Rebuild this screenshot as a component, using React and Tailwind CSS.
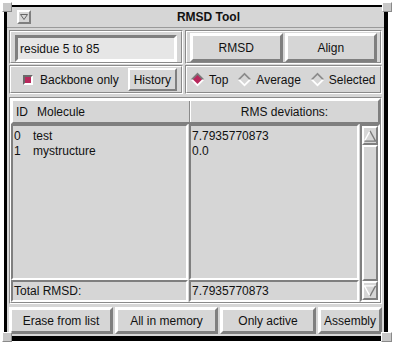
import React from "react";

const raised =
  "border-2 border-t-white border-l-white border-b-[#7f7f7f] border-r-[#7f7f7f]";
const sunken =
  "border-2 border-t-[#7f7f7f] border-l-[#7f7f7f] border-b-white border-r-white";
const etched = "border border-t-[#8a8a8a] border-l-[#8a8a8a] border-b-white border-r-white";

function Frame({ className = "", children }) {
  // etched group frame (Motif style)
  return (
    <div className={`${etched} ${className}`}>
      <div className="h-full border border-t-white border-l-white border-b-[#8a8a8a] border-r-[#8a8a8a]">
        {children}
      </div>
    </div>
  );
}

function Radio({ on, label }) {
  return (
    <span className="flex items-center gap-[4px]">
      <svg width="15" height="15" viewBox="0 0 15 15">
        {on ? (
          <>
            <polygon points="7.5,0.5 14.5,7.5 7.5,14.5 0.5,7.5" fill="#ffffff" />
            <polygon points="7.5,0.5 14.5,7.5 0.5,7.5" fill="#7a7a7a" />
            <polygon points="7.5,3 12,7.5 7.5,12 3,7.5" fill="#b8285c" />
          </>
        ) : (
          <>
            <polygon points="7.5,0.5 14.5,7.5 7.5,14.5 0.5,7.5" fill="#ffffff" />
            <polygon points="7.5,0.5 14.5,7.5 0.5,7.5" fill="#8a8a8a" />
            <polygon points="7.5,3 12,7.5 7.5,12 3,7.5" fill="#d6d6d6" />
          </>
        )}
      </svg>
      <span>{label}</span>
    </span>
  );
}

function Arrow({ up }) {
  return (
    <div className={`${raised} h-[19px] flex items-center justify-center bg-[#d6d6d6]`}>
      <svg width="13" height="12" viewBox="0 0 13 12">
        {up ? (
          <>
            <polygon points="6.5,0.5 12.5,11.5 0.5,11.5" fill="#d6d6d6" />
            <polyline points="0.5,11.5 6.5,0.5" stroke="#ffffff" strokeWidth="1.4" fill="none" />
            <polyline points="6.5,0.5 12.5,11.5 0.5,11.5" stroke="#7a7a7a" strokeWidth="1.4" fill="none" />
          </>
        ) : (
          <>
            <polygon points="0.5,0.5 12.5,0.5 6.5,11.5" fill="#d6d6d6" />
            <polyline points="6.5,11.5 0.5,0.5 12.5,0.5" stroke="#ffffff" strokeWidth="1.4" fill="none" />
            <polyline points="12.5,0.5 6.5,11.5" stroke="#7a7a7a" strokeWidth="1.4" fill="none" />
          </>
        )}
      </svg>
    </div>
  );
}

const rows = [
  { id: "0", name: "test", rms: "7.7935770873" },
  { id: "1", name: "mystructure", rms: "0.0" },
];

export default function App() {
  return (
    <div className="w-[395px] h-[350px] bg-white relative pl-[4px] pt-[5px] text-[12px] text-[#111] font-['Liberation_Sans',Arial,sans-serif]">
      {/* window corner handles */}
      <div className="absolute left-[2px] top-[2px] w-[10px] h-[10px] bg-[#c8c8c8] border border-t-white border-l-white border-b-[#8a8a8a] border-r-[#8a8a8a]" />
      <div className="absolute left-[382px] top-[2px] w-[10px] h-[10px] bg-[#c8c8c8] border border-t-white border-l-white border-b-[#8a8a8a] border-r-[#8a8a8a]" />
      <div className="absolute left-[2px] top-[332px] w-[10px] h-[10px] bg-[#c8c8c8] border border-t-white border-l-white border-b-[#8a8a8a] border-r-[#8a8a8a]" />
      <div className="absolute left-[381px] top-[332px] w-[11px] h-[10px] bg-[#c8c8c8] border border-t-white border-l-white border-b-[#8a8a8a] border-r-[#8a8a8a]" />

      <div className="w-[384px] h-[336px] border-black border-t-2 border-l-[3px] border-r-[4px] border-b-[5px] bg-[#d6d6d6] flex flex-col">
        {/* title bar */}
        <div className="h-[21px] flex items-center border-b border-b-[#9a9a9a]">
          <div className={`ml-[10px] w-[14px] h-[14px] ${raised} border flex items-center justify-center`}>
            <svg width="8" height="6" viewBox="0 0 8 6">
              <polygon points="0.5,0.5 7.5,0.5 4,5.5" fill="none" stroke="#666" />
            </svg>
          </div>
          <div className="flex-1 text-center font-bold text-[12px] pl-[2px]">RMSD Tool</div>
        </div>

        <div className="flex-1 flex flex-col px-[2px] pt-[2px] pb-[2px] gap-[2px]">
          {/* top controls */}
          <div className="grid grid-cols-[174px_1fr] grid-rows-[34px_29px] gap-x-[2px] gap-y-[1px]">
            <Frame className="h-full">
              <div className="px-[4px] pt-[3px]">
                <div className={`${sunken} h-[27px] bg-[#e6e6e6] flex items-center pl-[2px] border-[3px]`}>
                  residue 5 to 85
                </div>
              </div>
            </Frame>
            <Frame className="h-full">
              <div className="flex gap-[2px] px-[3px] pt-[1px] h-full">
                <button className={`${raised} border-[3px] flex-1 h-[29px] bg-[#d6d6d6]`}>RMSD</button>
                <button className={`${raised} border-[3px] flex-1 h-[29px] bg-[#d6d6d6]`}>Align</button>
              </div>
            </Frame>
            <Frame className="h-full">
              <div className="flex items-center h-full pl-[12px] pr-[4px]">
                <span className={`w-[10px] h-[10px] bg-[#b8285c] border-2 border-t-[#6a6a6a] border-l-[#6a6a6a] border-b-white border-r-white`} />
                <span className="ml-[7px] flex-1">Backbone only</span>
                <button className={`${raised} h-[23px] px-[4px] bg-[#d6d6d6]`}>History</button>
              </div>
            </Frame>
            <Frame className="h-full">
              <div className="flex items-center h-full pl-[3px] gap-[9px]">
                <Radio on label="Top" />
                <Radio label="Average" />
                <Radio label="Selected" />
              </div>
            </Frame>
          </div>

          {/* list */}
          <Frame className="flex-1 mt-[1px]">
            <div className="flex flex-col h-full">
              <div className={`h-[25px] flex ${raised} border`}>
                <div className="w-[177px] flex items-center pl-[3px] gap-[9px] border-r border-r-[#8a8a8a]">
                  <span>ID</span>
                  <span>Molecule</span>
                </div>
                <div className="flex-1 flex items-center justify-center border-l border-l-white">RMS deviations:</div>
              </div>
              <div className="flex-1 flex">
                <div className="flex-1 flex flex-col">
                  <div className="flex-1 flex">
                    <div className={`w-[177px] ${sunken} border pt-[2px]`}>
                      {rows.map((r) => (
                        <div key={r.id} className="flex h-[15px] items-center">
                          <span className="w-[20px] pl-[1px]">{r.id}</span>
                          <span>{r.name}</span>
                        </div>
                      ))}
                    </div>
                    <div className={`flex-1 ${sunken} border pt-[2px] ml-[1px]`}>
                      {rows.map((r) => (
                        <div key={r.id} className="h-[15px] flex items-center pl-[1px]">{r.rms}</div>
                      ))}
                    </div>
                  </div>
                  <div className="h-[22px] flex">
                    <div className={`w-[177px] ${sunken} border flex items-center pl-[1px]`}>Total RMSD:</div>
                    <div className={`flex-1 ${sunken} border flex items-center pl-[1px] ml-[1px]`}>7.7935770873</div>
                  </div>
                </div>
                <div className={`w-[20px] flex flex-col ml-[1px] ${sunken} border bg-[#cfcfcf]`}>
                  <Arrow up />
                  <div className={`flex-1 ${raised} border bg-[#d6d6d6]`} />
                  <Arrow />
                </div>
              </div>
            </div>
          </Frame>

          {/* bottom buttons */}
          <div className="flex gap-[2px] h-[27px] mt-[1px]">
            <button className={`${raised} border-[3px] w-[104px] bg-[#d6d6d6]`}>Erase from list</button>
            <button className={`${raised} border-[3px] w-[103px] bg-[#d6d6d6]`}>All in memory</button>
            <button className={`${raised} border-[3px] w-[96px] bg-[#d6d6d6]`}>Only active</button>
            <button className={`${raised} border-[3px] flex-1 bg-[#d6d6d6]`}>Assembly</button>
          </div>
        </div>
      </div>
    </div>
  );
}
